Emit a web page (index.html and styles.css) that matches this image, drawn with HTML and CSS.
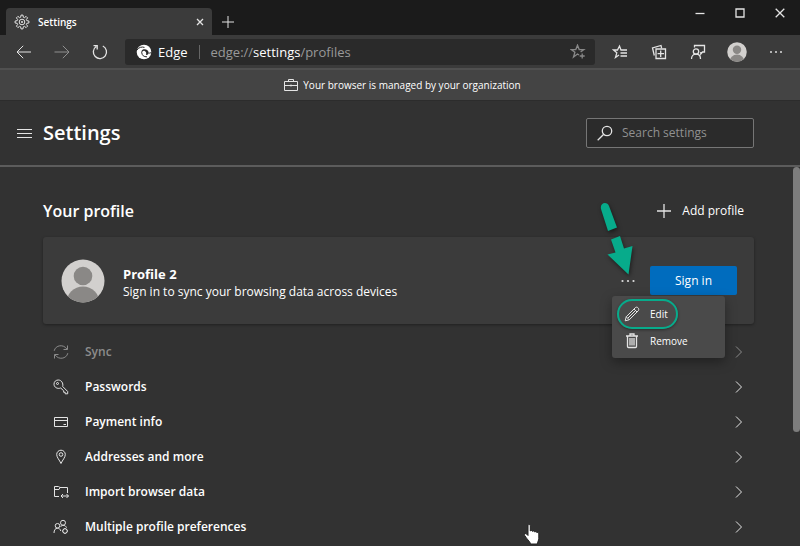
FILE: index.html
```html
<!DOCTYPE html>
<html lang="en">
<head>
    <meta charset="UTF-8">
    <meta name="viewport" content="width=device-width, initial-scale=1.0">
    <title>Settings</title>
    <link rel="stylesheet" href="styles.css">
</head>
<body>
    <div class="titlebar">
        <div class="tab">
            <svg class="icon" width="16" height="16" viewBox="0 0 16 16">
                <path d="M6.7 3.2 7 1.1h2l.3 2.1 1.1.5 1.7-1.3 1.5 1.5-1.3 1.7.5 1.1 2.1.3v2l-2.1.3-.5 1.1 1.3 1.7-1.5 1.5-1.7-1.3-1.1.5L9 14.9H7l-.3-2.1-1.1-.5-1.7 1.3-1.5-1.5 1.3-1.7-.5-1.1L1.1 9V7l2.1-.3.5-1.1-1.3-1.7 1.5-1.5 1.7 1.3z"/>
                <circle cx="8" cy="8" r="2.8"/>
                <circle cx="8" cy="8" r=".7"/>
            </svg>
            <span class="tab-title">Settings</span>
            <button class="icon-btn tab-close" aria-label="Close tab">
                <svg class="icon strong" width="8" height="8" viewBox="0 0 8 8"><path d="M1 1l6 6M7 1 1 7"/></svg>
            </button>
        </div>
        <button class="icon-btn new-tab" aria-label="New tab">
            <svg class="icon" width="12" height="12" viewBox="0 0 12 12"><path d="M6 0v12M0 6h12"/></svg>
        </button>
        <div class="window-controls">
            <button class="icon-btn" aria-label="Minimize"><svg class="icon strong" width="10" height="10" viewBox="0 0 10 10"><path d="M.5 5.5h9"/></svg></button>
            <button class="icon-btn" aria-label="Maximize"><svg class="icon strong" width="10" height="10" viewBox="0 0 10 10"><path d="M1 1h8v8H1z"/></svg></button>
            <button class="icon-btn" aria-label="Close"><svg class="icon strong" width="10" height="10" viewBox="0 0 10 10"><path d="M.7.7l8.6 8.6M9.3.7.7 9.3"/></svg></button>
        </div>
    </div>

    <div class="toolbar">
        <div class="nav">
            <button class="icon-btn" aria-label="Back"><svg class="icon" width="16" height="14" viewBox="0 0 16 14"><path d="M15 7H1M7.200 .8 1 7l6.200 6.200"/></svg></button>
            <button class="icon-btn dim" aria-label="Forward"><svg class="icon" width="16" height="14" viewBox="0 0 16 14"><path d="M.5 7H15M8.800 .8 15 7l-6.200 6.200"/></svg></button>
            <button class="icon-btn" aria-label="Refresh"><svg class="icon strong" width="16" height="16" viewBox="0 0 16 16"><path d="M4.200 2.500A6.600 6.600 0 1 0 10.800 2M1.500 1.700h3.700v3.700"/></svg></button>
        </div>
        <div class="address">
            <svg class="edge-logo" width="16" height="16" viewBox="0 0 16 16">
                <circle cx="8" cy="8" r="7.300" fill="#fff"/>
                <path d="M5.800 9.500C4.600 6.800 6.500 4.800 9 5.200c2.600.4 4 2.200 3.600 4.100-.3 1.300-1.500 1.900-2.700 1.500.7-1.500.3-3.300-1.200-3.900C7.200 6.300 6 7.500 5.800 9.500z" fill="#2a2a2a"/>
                <path d="M5.800 8.500c0 2.700 2 4.500 5.200 4.300M1 6C2.800 3.200 5.800 2.600 8.500 3.400M12.600 9c1.400.3 2.400-.2 3-1" fill="none" stroke="#2a2a2a"/>
            </svg>
            <span class="address-brand">Edge</span>
            <div class="address-url" role="textbox" aria-label="Address" contenteditable="true" spellcheck="false">edge://<span>settings</span>/profiles</div>
            <button class="icon-btn dim" aria-label="Add to favorites">
                <svg class="icon strong" width="16" height="16" viewBox="0 0 16 16"><path d="M9 11 7.500 10l-4 3 1.400-4.800L1.200 5.600h4.600L7.500 1.200l1.700 4.400h4.600L10.600 8M12.200 9.500v5M9.700 12h5"/></svg>
            </button>
        </div>
        <div class="tools">
            <button class="icon-btn" aria-label="Favorites">
                <svg class="icon strong" width="16" height="16" viewBox="0 0 16 16"><path d="M7 11 3.500 13.500l1.300-4.700L1.500 6h4L7.500 2l1.500 4h6M8.500 9H15M8.500 12H15"/></svg>
            </button>
            <button class="icon-btn" aria-label="Collections">
                <svg class="icon strong" width="16" height="16" viewBox="0 0 16 16"><path d="M5 5h9.500v9.500H5zM9.700 6.500v6.500M6.500 9.700h6.500M3.300 11.500 1.500 4l8.500-2.500.6 2.500"/></svg>
            </button>
            <button class="icon-btn" aria-label="Feedback">
                <svg class="icon strong" width="16" height="16" viewBox="0 0 16 16"><circle cx="6" cy="7.500" r="2.700"/><path d="M1.500 15c0-3 2-4.800 4.500-4.800s4.500 1.800 4.500 4.800M4.500 3.500v-2h10V8H12.500l-1.700 2V8"/></svg>
            </button>
            <button class="icon-btn" aria-label="Profile">
                <svg width="20" height="20" viewBox="0 0 44 44"><use href="#avatar"/></svg>
            </button>
            <button class="icon-btn" aria-label="Settings and more">
                <svg width="14" height="4" viewBox="0 0 14 4" fill="#ddd"><circle cx="2" cy="2" r="1"/><circle cx="7" cy="2" r="1"/><circle cx="12" cy="2" r="1"/></svg>
            </button>
        </div>
    </div>

    <div class="banner">
        <svg class="icon" width="14" height="14" viewBox="0 0 14 14"><path d="M.5 3.500h13v9H.5zM4.500 3.500v-2h5v2M.5 7.500h13M7 6.500v2"/></svg>
        <span>Your browser is managed by your organization</span>
    </div>

    <header class="header">
        <button class="icon-btn menu-btn" aria-label="Settings menu">
            <svg class="icon" width="16" height="9" viewBox="0 0 16 9"><path d="M1 .5h15M1 4.500h15M1 8.500h15"/></svg>
        </button>
        <h1>Settings</h1>
        <label class="search">
            <svg class="icon strong" width="16" height="16" viewBox="0 0 16 16"><circle cx="10" cy="6" r="4.700"/><path d="M6.500 9.500.7 15.300"/></svg>
            <input type="search" placeholder="Search settings" aria-label="Search settings">
        </label>
    </header>

    <main class="content">
        <div class="scrollbar"></div>
        <div class="section-head">
            <h2>Your profile</h2>
            <button class="add-profile">
                <svg class="icon strong" width="14" height="14" viewBox="0 0 14 14"><path d="M7 0v14M0 7h14"/></svg>
                Add profile
            </button>
        </div>

        <div class="card">
            <svg width="44" height="44" viewBox="0 0 44 44">
                <defs>
                    <clipPath id="round"><circle cx="22" cy="22" r="21.500"/></clipPath>
                    <g id="avatar">
                        <circle cx="22" cy="22" r="21.500" fill="#d2d0ce"/>
                        <g clip-path="url(#round)" fill="#8a8886"><circle cx="22" cy="17" r="9.300"/><circle cx="22" cy="44" r="16.500"/></g>
                    </g>
                </defs>
                <use href="#avatar"/>
            </svg>
            <div class="card-text">
                <h3>Profile 2</h3>
                <p>Sign in to sync your browsing data across devices</p>
            </div>
            <div class="card-actions">
                <button class="icon-btn more" aria-label="More actions">
                    <svg width="14" height="4" viewBox="0 0 14 4" fill="#ddd"><circle cx="1.500" cy="2" r="1.100"/><circle cx="7" cy="2" r="1.100"/><circle cx="12.500" cy="2" r="1.100"/></svg>
                </button>
                <button class="sign-in">Sign in</button>
                <div class="menu">
                    <button class="menu-item">
                        <svg class="icon" width="16" height="16" viewBox="0 0 16 16"><path d="M1.200 14.800l1-4L11.500 1.500c1.800-1.200 4 1 3 3L5.200 13.800zM10 3l3 3M2.200 10.800l3 3M4 12l7-7"/></svg>
                        Edit
                    </button>
                    <button class="menu-item">
                        <svg class="icon strong" width="16" height="16" viewBox="0 0 16 16"><path d="M2 3h12M6 3V1h4v2M3.500 3v10.500q0 1 1 1h7q1 0 1-1V3M6 5v7.500M8 5v7.500M10 5v7.500"/></svg>
                        Remove
                    </button>
                    <div class="ring"></div>
                </div>
                <svg class="arrow" width="40" height="80" viewBox="0 0 40 80">
                    <path d="M6.300 11C3.800 4 12 1.500 14.200 7.500L22 28.500l-9 3.500z"/>
                    <path d="M16 40.500l9-3.500 4 12.500L37.500 47 33.500 75.500 12.500 55.500l8-2z"/>
                </svg>
            </div>
        </div>

        <nav class="rows">
            <a href="#sync" class="row disabled">
                <svg class="icon" width="16" height="16" viewBox="0 0 16 16"><path d="M1.200 6.800C2.500 1 10.500-.2 14 5.200M14.500 1.500v4h-4M14.800 9.200C13.500 15 5.500 16.200 2 10.800M1.500 14.500v-4h4"/></svg>
                <span>Sync</span>
                <svg class="icon" width="8" height="12" viewBox="0 0 8 12"><path d="M1 .5 6.500 6 1 11.500"/></svg>
            </a>
            <a href="#passwords" class="row">
                <svg class="icon" width="16" height="16" viewBox="0 0 16 16"><path d="M9.700 7.500l5 5v2.300h-2.500v-1.500h-1.500v-1.500l-3-2.800C4.500 10.300 1 8.300 1 5.200 1 2.500 3 1 5.300 1c3 0 5.200 3 4.400 6.500z"/><circle cx="4.500" cy="4.500" r="1"/></svg>
                <span>Passwords</span>
                <svg class="icon" width="8" height="12" viewBox="0 0 8 12"><path d="M1 .5 6.500 6 1 11.500"/></svg>
            </a>
            <a href="#payment" class="row">
                <svg class="icon" width="16" height="16" viewBox="0 0 16 16"><path d="M1.500 3.500h13v9h-13zM1.500 6.500h13M10.500 10.500H13"/></svg>
                <span>Payment info</span>
                <svg class="icon" width="8" height="12" viewBox="0 0 8 12"><path d="M1 .5 6.500 6 1 11.500"/></svg>
            </a>
            <a href="#addresses" class="row">
                <svg class="icon" width="16" height="16" viewBox="0 0 16 16"><path d="M8 14.500C6.500 11 3.700 8.500 3.700 5.500a4.300 4.300 0 0 1 8.600 0C12.300 8.500 9.500 11 8 14.500z"/><circle cx="8" cy="5.500" r="1.800"/></svg>
                <span>Addresses and more</span>
                <svg class="icon" width="8" height="12" viewBox="0 0 8 12"><path d="M1 .5 6.500 6 1 11.500"/></svg>
            </a>
            <a href="#import" class="row">
                <svg class="icon" width="16" height="16" viewBox="0 0 16 16"><path d="M6 12.500H1.500v-10h4L7 3.500h7.500V9M1.500 5.500H6l1-2M8 12h7.500M10 10l-2 2 2 2M13.500 10l2 2-2 2"/></svg>
                <span>Import browser data</span>
                <svg class="icon" width="8" height="12" viewBox="0 0 8 12"><path d="M1 .5 6.500 6 1 11.500"/></svg>
            </a>
            <a href="#multiple" class="row">
                <svg class="icon" width="16" height="16" viewBox="0 0 16 16"><circle cx="10" cy="3.800" r="2.500"/><circle cx="4.500" cy="6.800" r="2.300"/><path d="M1 14c0-3 1.300-4.800 3.500-4.800 1.500 0 2.800.8 3.300 2.800M7.500 8C8.200 6.800 9 6.300 10 6.300c1.800 0 3 .9 3.500 2.400"/><circle cx="12" cy="12" r="2.300"/><path d="M12 9v1M12 14v1M9.200 12h1M14 12h1M10 10l.7.7M13.300 13.300l.7.700M14 10l-.7.7M10 14l.7-.7"/></svg>
                <span>Multiple profile preferences</span>
                <svg class="icon" width="8" height="12" viewBox="0 0 8 12"><path d="M1 .5 6.500 6 1 11.500"/></svg>
            </a>
        </nav>
    </main>

    <svg class="cursor" width="18" height="22" viewBox="0 0 18 22">
        <path d="M5 1.500c0-1.300 2.300-1.300 2.300 0V7c.5-.8 2-.6 2.200.4.600-.8 2-.5 2.200.6.700-.7 2-.3 2.200.6.700-.3 1.900 0 1.900 1.200v4.500c0 2.500-1.500 3.700-1.500 5.700H7.500c0-1.800-2.500-3.500-5.800-8.500-.9-1.500.7-2.500 1.900-1.400L5 11.500z"/>
    </svg>
</body>
</html>
```

FILE: styles.css
```css
* {
    box-sizing: border-box;
}

body {
    margin: 0;
    height: 100vh;
    display: flex;
    flex-direction: column;
    position: relative;
    overflow: hidden;
    background-color: #323232;
    color: #fff;
    font-family: "Open Sans", "Noto Sans", sans-serif;
    font-size: 12px;
    line-height: 18px;
}

h1, h2, h3, p {
    margin: 0;
}

button {
    border: none;
    padding: 0;
    background: none;
    color: inherit;
    font: inherit;
}

svg {
    display: block;
    flex-shrink: 0;
}

.icon {
    fill: none;
    stroke: #e4e4e4;
    stroke-width: 1;
}

.strong {
    stroke-width: 1.3;
}

.icon-btn {
    display: flex;
    align-items: center;
    justify-content: center;
}

.dim {
    opacity: 0.5;
}

/* window frame */
.titlebar {
    display: flex;
    height: 35px;
    padding-left: 6px;
    background-color: #1b1b1b;
}

.tab {
    display: flex;
    align-items: center;
    gap: 8px;
    width: 206px;
    margin-top: 8px;
    padding: 0 8px;
    border-radius: 4px 4px 0 0;
    background-color: #3b3b3b;
    font-size: 10px;
    font-weight: 600;
}

.tab-title {
    flex: 1;
}

.tab-close {
    width: 8px;
}

.new-tab {
    width: 32px;
    margin-top: 8px;
}

.window-controls {
    display: flex;
    height: 26px;
    margin-left: auto;
}

.window-controls .icon-btn {
    width: 40px;
}

.toolbar {
    display: flex;
    align-items: center;
    height: 33px;
    background-color: #3b3b3b;
}

.nav {
    display: flex;
    width: 125px;
    padding-left: 5px;
}

.nav .icon-btn {
    width: 38px;
}

.address {
    flex: 1;
    display: flex;
    align-items: center;
    height: 26px;
    padding: 0 9px 0 11px;
    border-radius: 3px;
    background-color: #2a2a2a;
    font-size: 13px;
}

.address-brand {
    margin: 0 11px 0 6px;
    padding-right: 11px;
    border-right: 1px solid #666;
    line-height: 14px;
}

.address-url {
    flex: 1;
    color: #999;
    outline: none;
}

.address-url span {
    color: #fff;
}

.tools {
    display: flex;
    padding: 0 5px;
}

.tools .icon-btn {
    width: 39px;
}

.banner {
    display: flex;
    align-items: center;
    justify-content: center;
    gap: 5px;
    height: 33px;
    padding-left: 5px;
    border-top: 2px solid #505050;
    border-bottom: 1px solid #2c2c2c;
    background-color: #444;
    font-size: 10px;
}

/* settings page */
.header {
    display: flex;
    align-items: center;
    height: 66px;
    padding: 0 46px 0 16px;
    border-bottom: 2px solid #5c5c5c;
}

.menu-btn {
    width: 16px;
    margin-right: 11px;
}

h1 {
    font-size: 20px;
    font-weight: 600;
    line-height: 28px;
}

.search {
    display: flex;
    align-items: center;
    gap: 9px;
    width: 168px;
    height: 30px;
    margin-left: auto;
    padding: 0 10px;
    border: 1px solid #767676;
    border-radius: 2px;
    background-color: #2b2b2b;
}

.search input {
    flex: 1;
    min-width: 0;
    padding: 0;
    border: none;
    outline: none;
    background: none;
    color: #fff;
    font: inherit;
}

.search input::placeholder {
    color: #919191;
}

.content {
    flex: 1;
    position: relative;
    padding: 30px 46px 0 43px;
}

.scrollbar {
    position: absolute;
    top: 0;
    right: 0;
    width: 7px;
    height: 70%;
    border-radius: 4px;
    background-color: #7d7d7d;
}

.section-head {
    display: flex;
    align-items: center;
    justify-content: space-between;
    height: 28px;
    margin-bottom: 12px;
}

h2 {
    font-size: 16px;
    font-weight: 600;
    line-height: 24px;
}

.add-profile {
    display: flex;
    align-items: center;
    gap: 11px;
    padding-right: 10px;
}

.card {
    display: flex;
    align-items: center;
    gap: 18px;
    height: 87px;
    padding: 0 17px 0 18px;
    border-radius: 3px;
    background-color: #3b3b3b;
    box-shadow: 0 1px 3px rgba(0, 0, 0, 0.35);
}

.card-text {
    flex: 1;
    padding-top: 4px;
}

h3 {
    font-size: 13px;
    font-weight: 700;
}

.card-actions {
    position: relative;
    display: flex;
}

.more {
    width: 32px;
    margin-right: 6px;
}

.sign-in {
    width: 87px;
    height: 29px;
    border-radius: 2px;
    background-color: #006cbe;
}

.menu {
    position: absolute;
    top: 30px;
    right: 12px;
    z-index: 1;
    width: 113px;
    padding: 4px 0;
    border-radius: 3px;
    background-color: #4a4a4a;
    box-shadow: 0 4px 12px rgba(0, 0, 0, 0.35);
}

.menu-item {
    display: flex;
    align-items: center;
    gap: 10px;
    width: 100%;
    height: 27px;
    padding-left: 12px;
    font-size: 10px;
}

/* callouts drawn over the page */
.ring {
    position: absolute;
    top: 3px;
    left: 5px;
    width: 61px;
    height: 30px;
    border: 2px solid #07ab8b;
    border-radius: 15px;
    box-shadow: 0 1px 3px rgba(0, 0, 0, 0.4);
}

.arrow {
    position: absolute;
    right: 102px;
    bottom: 16px;
    fill: #07ab8b;
    filter: drop-shadow(1px 2px 2px rgba(0, 0, 0, 0.5));
}

.cursor {
    position: absolute;
    bottom: 0;
    left: 66%;
    margin-left: -5px;
    fill: #fff;
    stroke: #222;
    stroke-width: 1;
}

.rows {
    padding-top: 10px;
}

.row {
    display: flex;
    align-items: center;
    gap: 16px;
    height: 35px;
    padding: 0 11px 0 10px;
    color: #fff;
    font-weight: 600;
    text-decoration: none;
}

.row span {
    flex: 1;
}

.disabled {
    color: #8c8c8c;
}

.disabled .icon {
    opacity: 0.5;
}
```
